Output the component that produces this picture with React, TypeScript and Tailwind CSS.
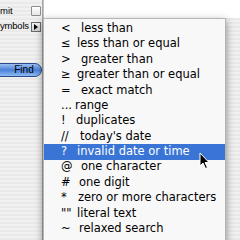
const items: [string, string, number][] = [
	['<', 'less than', 37],
	['≤', 'less than or equal', 33],
	['>', 'greater than', 37],
	['≥', 'greater than or equal', 33],
	['=', 'exact match', 37],
	['...', 'range', 31],
	['!', 'duplicates', 32],
	['//', "today's date", 36],
	['?', 'invalid date or time', 33],
	['@', 'one character', 37],
	['#', 'one digit', 35],
	['*', 'zero or more characters', 34],
	['""', 'literal text', 33],
	['~', 'relaxed search', 35]
];

const stripes =
	'bg-[repeating-linear-gradient(0deg,#e9e9e9_0px,#e9e9e9_2px,#f1f1f1_2px,#f1f1f1_4px)]';

const Cursor = () => (
	<svg
		className="absolute left-[199px] top-[152px]"
		width="12"
		height="18"
		viewBox="0 0 12 18"
	>
		<path
			d="M1 1 L1 14 L4 11 L6.5 16.5 L8.5 15.5 L6 10.5 L10 10.5 Z"
			fill="#000"
			stroke="#fff"
			strokeWidth="1"
		/>
	</svg>
);

const App = () => (
	<div
		className="relative w-[240px] h-[240px] overflow-hidden flex text-black"
		style={{ fontFamily: '"DejaVu Sans", "Liberation Sans", sans-serif' }}
	>
		<div
			className={`w-[42px] h-full ${stripes} flex flex-col pt-[5px]`}
			style={{ fontFamily: '"Liberation Sans", Arial, sans-serif' }}
		>
			<div className="flex items-center h-[12px]">
				<div className="w-[30px] flex">
					<span className="text-[9.5px] whitespace-nowrap">mit</span>
				</div>
				<div className="ml-[1px] w-[10px] h-[10px] border border-[#8c8c8c] bg-gradient-to-b from-white to-[#e6e6e6] rounded-[1px]" />
			</div>
			<div className="flex items-center h-[11px] mt-[4px]">
				<div className="w-[30px] flex">
					<span className="text-[9.5px] tracking-[-0.2px] whitespace-nowrap">
						ymbols
					</span>
				</div>
				<div className="ml-[1px] w-[10px] h-[10px] border border-[#6a6a6a] bg-gradient-to-b from-[#f4f4f4] to-[#cfcfcf] flex items-center justify-center">
					<div className="w-0 h-0 border-y-[3px] border-y-transparent border-l-[4px] border-l-black" />
				</div>
			</div>
			<div className="mt-[31px] -ml-[8px] w-[50px] h-[14px] rounded-full border border-[#2b4a8c] bg-gradient-to-b from-[#9cc0f2] via-[#4a80d8] to-[#8fbaf2] flex items-center justify-center pl-[14px]">
				<span className="text-[10px] leading-none">Find</span>
			</div>
		</div>
		<div className="w-[2px] h-full bg-gradient-to-r from-[#9a9a9a] to-[#cfcfcf]" />
		<div className="flex-1 flex flex-col">
			<div className="h-[18px] bg-white" />
			<div className={`flex-1 ${stripes}`} />
		</div>
		<div className="absolute left-[43px] top-[18px] w-[183px] h-[240px] bg-[#f8f8f8] border-t border-l border-r border-[#b5b5b5] shadow-[0_3px_8px_rgba(0,0,0,0.45)] pt-[2px]">
			{items.map(([sym, label, x]) => {
				const active = sym === '?';
				return (
					<div
						key={label}
						className={`relative h-[15.4px] flex items-center text-[11.5px] leading-none whitespace-nowrap ${active ? 'bg-[#3a75d6] text-white' : ''}`}
					>
						<span className="absolute left-[17px]">{sym}</span>
						<span className="absolute" style={{ left: x }}>
							{label}
						</span>
					</div>
				);
			})}
		</div>
		<Cursor />
	</div>
);

export default App;
